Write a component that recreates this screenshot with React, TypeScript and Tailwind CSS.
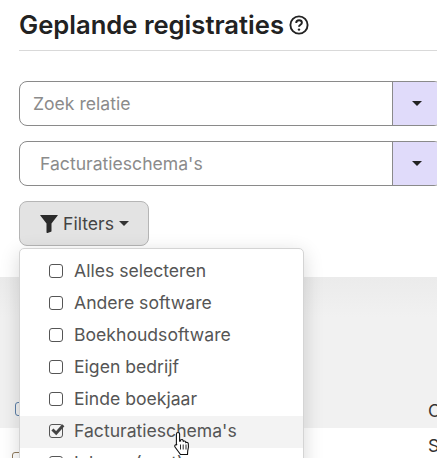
import React from 'react';

const filters = ['Alles selecteren', 'Andere software', 'Boekhoudsoftware', 'Eigen bedrijf', 'Einde boekjaar', "Facturatieschema's", 'Inkoop (cost)'];

function Caret({ className }: { className: string }) {
  return (
    <svg viewBox="0 0 10 5" className={className}>
      <path d="M0 0h10L5 5z" fill="currentColor" />
    </svg>
  );
}

function SelectRow({ label, indent }: { label: string; indent: string }) {
  return (
    <div className="flex h-[45px] w-[423px] overflow-hidden rounded-[8px] border border-[#8a8a8a]">
      <div className={`flex flex-1 items-center pt-[2px] text-[17.6px] text-[#8b8b8b] ${indent}`}>{label}</div>
      <div className="flex w-[49px] shrink-0 items-center justify-center border-l border-[#8a8a8a] bg-[#e0dbfa] text-[#222]">
        <Caret className="h-[5px] w-[10px]" />
      </div>
    </div>
  );
}

export default function App() {
  return (
    <div className="relative h-[458px] w-[437px] overflow-hidden bg-white font-['Inter',sans-serif]">
      <div className="pl-[19px]">
        <div className="flex h-[51px] items-center border-b border-[#d9d9d9] pb-[1px]">
          <h1 className="text-[25.6px] font-semibold leading-none text-[#222]">Geplande registraties</h1>
          <svg viewBox="0 0 20 20" className="ml-[5px] h-[20px] w-[20px] text-[#222]" fill="none" stroke="currentColor">
            <circle cx="10" cy="10" r="8.6" strokeWidth="1.9" />
            <path d="M7.2 8c0-1.700 1.300-2.700 2.900-2.700s2.800 1 2.800 2.500c0 2-2.900 2-2.900 4" strokeWidth="1.9" />
            <circle cx="10" cy="14.600" r="1.200" fill="currentColor" stroke="none" />
          </svg>
        </div>

        <div className="mt-[30px] flex flex-col gap-[15px]">
          <SelectRow label="Zoek relatie" indent="pl-[13px]" />
          <SelectRow label="Facturatieschema's" indent="pl-[20px]" />
        </div>

        <button className="mt-[15px] flex h-[45px] w-[130px] items-center rounded-[8px] border border-[#b5b5b5] bg-[#e3e3e3] pl-[20px] text-[17.6px] text-[#444]">
          <svg viewBox="0 0 18 18" className="mr-[5px] h-[18px] w-[18px] text-[#2b2b2b]">
            <path d="M.5 0h17q.5 0 .2.6L11.500 8.500V16q0 .5-.5.8L7.500 18q-1 .2-1-1V8.500L.3.600Q0 0 .5 0z" fill="currentColor" />
          </svg>
          <span className="pt-[2px]">Filters</span>
          <Caret className="ml-[5px] h-[5px] w-[10px] text-[#333]" />
        </button>
      </div>

      {/* gray table header behind the menu */}
      <div className="relative mt-[31px] h-[151px] bg-[linear-gradient(#ebebeb,#f1f1f1_40px)]">
        <span className="absolute left-[428px] top-[121px] text-[17.6px] text-[#333]">O</span>
        <div className="absolute left-[15px] top-[125px] h-[14px] w-[13px] rounded-[3px] border border-[#5b7fa8]" />
      </div>
      <div className="relative">
        <span className="absolute left-[428px] top-[5px] text-[17.6px] text-[#333]">S</span>
        <div className="absolute left-[12px] top-[24px] h-[14px] w-[13px] rounded-[3px] border border-[#8f7a5c]" />
      </div>

      {/* dropdown */}
      <div className="absolute left-[19px] top-[248px] h-[240px] w-[285px] rounded-[5px] border border-[#d4d4d4] bg-white py-[7px] shadow-[0_5px_20px_rgba(0,0,0,0.16)]">
        {filters.map(f => (
          <div key={f} className={`flex h-[32px] items-center pb-[2px] pl-[29px] text-[17.6px] text-[#555] ${f === "Facturatieschema's" ? 'bg-[#f3f3f3]' : ''}`}>
            <span className="relative h-[14px] w-[14px] rounded-[3px] border-[1.5px] border-[#555]">
              {f === "Facturatieschema's" && (
                <svg viewBox="0 0 14 14" className="absolute left-[-1px] top-[-3px] h-[16px] w-[16px]">
                  <path d="M3 6.500l3.300 3.300 6.200-7" fill="none" stroke="#444" strokeWidth="2.600" />
                </svg>
              )}
            </span>
            <span className="ml-[11px]">{f}</span>
          </div>
        ))}
      </div>

      {/* pointer cursor */}
      <svg viewBox="0 0 18 24" className="absolute left-[173px] top-[431px] h-[25px] w-[18px]">
        <path d="M5 1c1 0 1.600.7 1.600 1.700v7l1-.1V8.400c1-.6 2-.4 2.400.4l.3 1c.9-.6 2-.3 2.300.6l.2.7c1-.5 2.300 0 2.500 1.100.4 2.400.2 5-.6 7.300L14.500 23H7.500l-5.500-7.500c-1-1.300.6-3 2-2l-.6-1V2.700C3.400 1.700 4 1 5 1z" fill="#fff" stroke="#111" strokeWidth="1.100" />
        <path d="M7.500 13v5M10.200 13v5M13 13v5" stroke="#111" strokeWidth=".9" />
      </svg>
    </div>
  );
}
